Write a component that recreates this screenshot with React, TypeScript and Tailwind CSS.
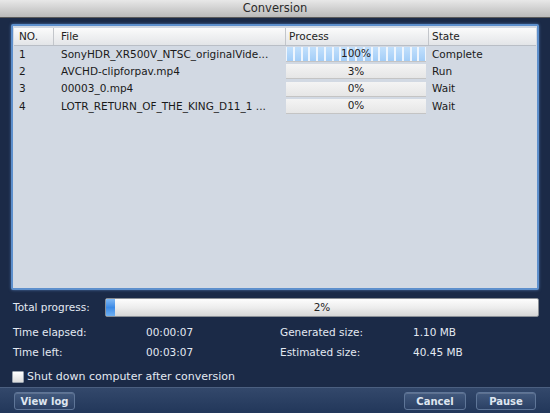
import React from "react";

type Job = {
  no: number;
  file: string;
  percent: number;
  state: string;
};

const jobs: Job[] = [
  { no: 1, file: "SonyHDR_XR500V_NTSC_originalVide...", percent: 100, state: "Complete" },
  { no: 2, file: "AVCHD-clipforpav.mp4", percent: 3, state: "Run" },
  { no: 3, file: "00003_0.mp4", percent: 0, state: "Wait" },
  { no: 4, file: "LOTR_RETURN_OF_THE_KING_D11_1 ...", percent: 0, state: "Wait" },
];

function ProcessCell({ percent }: { percent: number }) {
  const done = percent >= 100;
  return (
    <div className="relative h-[15px] w-[140px] overflow-hidden border-b border-[#c4c4c4] bg-gradient-to-b from-[#f4f4f4] to-[#e6e6e6]">
      {done && (
        <div className="absolute inset-0 flex gap-[2px] bg-[#eef5fd] px-[1px]">
          {Array.from({ length: 18 }).map((_, i) => (
            <div key={i} className="h-full flex-1 bg-gradient-to-b from-[#c2e0fc] to-[#a3cdf7]" />
          ))}
        </div>
      )}
      <div className="relative flex h-full items-center justify-center text-[#222]">{percent}%</div>
    </div>
  );
}

function Button({ label, width }: { label: string; width: string }) {
  return (
    <button
      className={`${width} h-[18px] rounded-[3px] border border-[#5f7698] bg-gradient-to-b from-[#435a7e] to-[#2b4064] text-[10px] font-bold text-[#dfe6f0] shadow-[inset_0_1px_0_rgba(255,255,255,0.15)]`}
    >
      {label}
    </button>
  );
}

export default function App() {
  return (
    <div
      className="flex h-[413px] w-[550px] flex-col overflow-hidden bg-[#1b2a47] text-[10.5px]"
      style={{ fontFamily: '"DejaVu Sans", Verdana, sans-serif' }}
    >
      {/* window title */}
      <div className="flex h-[18px] shrink-0 items-center justify-center border-b border-[#5a5a5a] bg-gradient-to-b from-[#e8e8e8] to-[#bababa] text-[11.5px] text-[#2a2a2a]">
        Conversion
      </div>

      <div className="flex flex-1 flex-col px-[11px] pt-[6px]">
        {/* job list */}
        <div className="h-[266px] rounded-[2px] border-2 border-[#5d8fcc] bg-[#d2d9e3] px-[1px] pt-[2px] shadow-[0_0_3px_rgba(110,160,230,0.6)]">
          <div className="grid h-[18px] grid-cols-[39px_232px_143px_1fr] border-b border-[#b9bec6] bg-gradient-to-b from-[#fbfbfb] to-[#e3e5e8] text-[#222]">
            <div className="flex items-center pl-[5px]">NO.</div>
            <div className="flex items-center border-l border-[#c3c6cb] pl-[7px]">File</div>
            <div className="flex items-center border-l border-[#c3c6cb] pl-[3px]">Process</div>
            <div className="flex items-center border-l border-[#c3c6cb] pl-[3px]">State</div>
          </div>
          {jobs.map((job) => (
            <div key={job.no} className="grid h-[17.3px] grid-cols-[39px_232px_143px_1fr] items-center text-[#1a1a1a]">
              <div className="pl-[5px]">{job.no}</div>
              <div className="whitespace-nowrap pl-[8px]">{job.file}</div>
              <div className="pl-[1px]">
                <ProcessCell percent={job.percent} />
              </div>
              <div className="pl-[4px]">{job.state}</div>
            </div>
          ))}
        </div>

        {/* overall progress */}
        <div className="mt-[8px] flex h-[19px] items-center">
          <div className="w-[94px] pl-[2px] text-[#e3e9f2]">Total progress:</div>
          <div className="relative h-[19px] flex-1 overflow-hidden rounded-[2px] border border-[#8a8f96] bg-gradient-to-b from-[#fdfdfd] via-[#ededed] to-[#d6d6d6]">
            <div className="absolute inset-y-0 left-0 w-[9px] bg-gradient-to-b from-[#7fb8f4] via-[#3b8ae6] to-[#6fb0f2]" />
            <div className="relative flex h-full items-center justify-center text-[#222]">2%</div>
          </div>
        </div>

        {/* timings and sizes */}
        <div className="mt-[8px] grid grid-cols-[133px_134px_133px_1fr] gap-y-[4px] pl-[2px] text-[#e3e9f2]">
          <div>Time elapsed:</div>
          <div>00:00:07</div>
          <div>Generated size:</div>
          <div>1.10 MB</div>
          <div>Time left:</div>
          <div>00:03:07</div>
          <div>Estimated size:</div>
          <div>40.45 MB</div>
        </div>

        <label className="mt-[8px] flex items-center gap-[3px] pl-[1px] text-[11px] text-[#e3e9f2]">
          <span className="h-[12px] w-[12px] rounded-[1px] border border-[#9aa3ae] bg-gradient-to-b from-white to-[#dcdcdc]" />
          Shut down computer after conversion
        </label>
      </div>

      {/* footer */}
      <div className="flex h-[26px] shrink-0 items-start justify-between border-t border-[#4b5f80] bg-gradient-to-b from-[#33486b] to-[#22375a] px-[14px] pt-[4px]">
        <Button label="View log" width="w-[61px]" />
        <div className="flex gap-[10px]">
          <Button label="Cancel" width="w-[62px]" />
          <Button label="Pause" width="w-[60px]" />
        </div>
      </div>
    </div>
  );
}
